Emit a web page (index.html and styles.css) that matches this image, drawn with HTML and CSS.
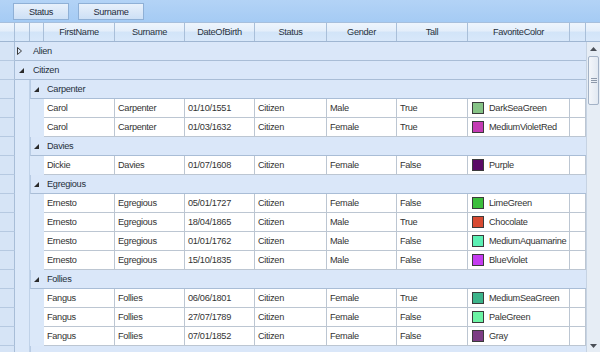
FILE: index.html
```html
<!DOCTYPE html>
<html>
<head>
<meta charset="utf-8">
<link rel="stylesheet" href="styles.css">
</head>
<body>
<div class="grid">
  <div class="grouppanel">
    <div class="gbtn w-status">Status</div>
    <div class="gbtn w-surname">Surname</div>
  </div>
  <div class="header">
    <div class="hc c-rh"></div>
    <div class="hc c-i1"></div>
    <div class="hc c-i2"></div>
    <div class="hc c-fn">FirstName</div>
    <div class="hc c-sn">Surname</div>
    <div class="hc c-db">DateOfBirth</div>
    <div class="hc c-st">Status</div>
    <div class="hc c-gd">Gender</div>
    <div class="hc c-tl">Tall</div>
    <div class="hc c-fc">FavoriteColor</div>
    <div class="hc c-ex"></div>
    <div class="hc c-sb"></div>
  </div>
  <div class="body">
    <div class="rows">
      <div class="row">
        <div class="rh"></div>
        <div class="grp l1"><span class="exp"><svg width="5" height="8" viewBox="0 0 5 8"><path d="M0.5 0.5 L4.5 4 L0.5 7.5 Z" fill="none" stroke="#3a3a3a" stroke-width="1"/></svg></span>Alien</div>
      </div>
      <div class="row">
        <div class="rh"></div>
        <div class="grp l1"><span class="exp open"><svg width="5" height="5" viewBox="0 0 5 5"><path d="M5 0 L5 5 L0 5 Z" fill="#2b2b2b"/></svg></span>Citizen</div>
      </div>

      <div class="row">
        <div class="rh"></div><div class="ind i1"></div>
        <div class="grp l2"><span class="exp open"><svg width="5" height="5" viewBox="0 0 5 5"><path d="M5 0 L5 5 L0 5 Z" fill="#2b2b2b"/></svg></span>Carpenter</div>
      </div>
      <div class="row">
        <div class="rh"></div><div class="ind i1"></div><div class="ind i2"></div>
        <div class="dc c-fn">Carol</div><div class="dc c-sn">Carpenter</div><div class="dc c-db">01/10/1551</div><div class="dc c-st">Citizen</div><div class="dc c-gd">Male</div><div class="dc c-tl">True</div>
        <div class="dc c-fc"><span class="sw" style="background:#86c386"></span>DarkSeaGreen</div><div class="dc c-ex"></div>
      </div>
      <div class="row">
        <div class="rh"></div><div class="ind i1"></div><div class="ind i2"></div>
        <div class="dc c-fn">Carol</div><div class="dc c-sn">Carpenter</div><div class="dc c-db">01/03/1632</div><div class="dc c-st">Citizen</div><div class="dc c-gd">Female</div><div class="dc c-tl">True</div>
        <div class="dc c-fc"><span class="sw" style="background:#c43cb4"></span>MediumVioletRed</div><div class="dc c-ex"></div>
      </div>

      <div class="row">
        <div class="rh"></div><div class="ind i1"></div>
        <div class="grp l2"><span class="exp open"><svg width="5" height="5" viewBox="0 0 5 5"><path d="M5 0 L5 5 L0 5 Z" fill="#2b2b2b"/></svg></span>Davies</div>
      </div>
      <div class="row">
        <div class="rh"></div><div class="ind i1"></div><div class="ind i2"></div>
        <div class="dc c-fn">Dickie</div><div class="dc c-sn">Davies</div><div class="dc c-db">01/07/1608</div><div class="dc c-st">Citizen</div><div class="dc c-gd">Female</div><div class="dc c-tl">False</div>
        <div class="dc c-fc"><span class="sw" style="background:#5a0a66"></span>Purple</div><div class="dc c-ex"></div>
      </div>

      <div class="row">
        <div class="rh"></div><div class="ind i1"></div>
        <div class="grp l2"><span class="exp open"><svg width="5" height="5" viewBox="0 0 5 5"><path d="M5 0 L5 5 L0 5 Z" fill="#2b2b2b"/></svg></span>Egregious</div>
      </div>
      <div class="row">
        <div class="rh"></div><div class="ind i1"></div><div class="ind i2"></div>
        <div class="dc c-fn">Ernesto</div><div class="dc c-sn">Egregious</div><div class="dc c-db">05/01/1727</div><div class="dc c-st">Citizen</div><div class="dc c-gd">Female</div><div class="dc c-tl">False</div>
        <div class="dc c-fc"><span class="sw" style="background:#3cbe3c"></span>LimeGreen</div><div class="dc c-ex"></div>
      </div>
      <div class="row">
        <div class="rh"></div><div class="ind i1"></div><div class="ind i2"></div>
        <div class="dc c-fn">Ernesto</div><div class="dc c-sn">Egregious</div><div class="dc c-db">18/04/1865</div><div class="dc c-st">Citizen</div><div class="dc c-gd">Male</div><div class="dc c-tl">True</div>
        <div class="dc c-fc"><span class="sw" style="background:#d84a32"></span>Chocolate</div><div class="dc c-ex"></div>
      </div>
      <div class="row">
        <div class="rh"></div><div class="ind i1"></div><div class="ind i2"></div>
        <div class="dc c-fn">Ernesto</div><div class="dc c-sn">Egregious</div><div class="dc c-db">01/01/1762</div><div class="dc c-st">Citizen</div><div class="dc c-gd">Male</div><div class="dc c-tl">False</div>
        <div class="dc c-fc"><span class="sw" style="background:#5cf0b4"></span>MediumAquamarine</div><div class="dc c-ex"></div>
      </div>
      <div class="row">
        <div class="rh"></div><div class="ind i1"></div><div class="ind i2"></div>
        <div class="dc c-fn">Ernesto</div><div class="dc c-sn">Egregious</div><div class="dc c-db">15/10/1835</div><div class="dc c-st">Citizen</div><div class="dc c-gd">Male</div><div class="dc c-tl">False</div>
        <div class="dc c-fc"><span class="sw" style="background:#c43cf0"></span>BlueViolet</div><div class="dc c-ex"></div>
      </div>

      <div class="row">
        <div class="rh"></div><div class="ind i1"></div>
        <div class="grp l2"><span class="exp open"><svg width="5" height="5" viewBox="0 0 5 5"><path d="M5 0 L5 5 L0 5 Z" fill="#2b2b2b"/></svg></span>Follies</div>
      </div>
      <div class="row">
        <div class="rh"></div><div class="ind i1"></div><div class="ind i2"></div>
        <div class="dc c-fn">Fangus</div><div class="dc c-sn">Follies</div><div class="dc c-db">06/06/1801</div><div class="dc c-st">Citizen</div><div class="dc c-gd">Female</div><div class="dc c-tl">True</div>
        <div class="dc c-fc"><span class="sw" style="background:#3cb48a"></span>MediumSeaGreen</div><div class="dc c-ex"></div>
      </div>
      <div class="row">
        <div class="rh"></div><div class="ind i1"></div><div class="ind i2"></div>
        <div class="dc c-fn">Fangus</div><div class="dc c-sn">Follies</div><div class="dc c-db">27/07/1789</div><div class="dc c-st">Citizen</div><div class="dc c-gd">Female</div><div class="dc c-tl">False</div>
        <div class="dc c-fc"><span class="sw" style="background:#6cf4a4"></span>PaleGreen</div><div class="dc c-ex"></div>
      </div>
      <div class="row">
        <div class="rh"></div><div class="ind i1"></div><div class="ind i2"></div>
        <div class="dc c-fn">Fangus</div><div class="dc c-sn">Follies</div><div class="dc c-db">07/01/1852</div><div class="dc c-st">Citizen</div><div class="dc c-gd">Female</div><div class="dc c-tl">False</div>
        <div class="dc c-fc"><span class="sw" style="background:#7c3c84"></span>Gray</div><div class="dc c-ex"></div>
      </div>
      <div class="row">
        <div class="rh"></div><div class="ind i1"></div>
        <div class="grp l2"></div>
      </div>
    </div>
    <div class="scroll">
      <div class="arrow up"><svg width="7" height="4" viewBox="0 0 7 4"><path d="M3.5 0 L7 4 L0 4 Z" fill="#4a4f57"/></svg></div>
      <div class="track">
        <div class="thumb"><span class="grip"></span><span class="grip"></span><span class="grip"></span></div>
      </div>
      <div class="arrow down"><svg width="7" height="4" viewBox="0 0 7 4"><path d="M0 0 L7 0 L3.5 4 Z" fill="#4a4f57"/></svg></div>
    </div>
  </div>
</div>
</body>
</html>
```

FILE: styles.css
```css
html, body {
  margin: 0;
  padding: 0;
}
body {
  width: 600px;
  height: 352px;
  overflow: hidden;
  font-family: "Liberation Sans", Arial, sans-serif;
  font-size: 9.2px;
  letter-spacing: -0.3px;
  color: #333333;
}
.grid {
  width: 600px;
  height: 352px;
  display: flex;
  flex-direction: column;
  background: #dce8f8;
  overflow: hidden;
}
.grouppanel {
  height: 22px;
  flex: none;
  box-sizing: border-box;
  padding: 3px 0 0 13px;
  display: flex;
  align-items: flex-start;
  gap: 9px;
  background: linear-gradient(#b3d3f6, #a5cbf4);
}
.gbtn {
  height: 17px;
  box-sizing: border-box;
  border: 1px solid #8fb0d6;
  background: linear-gradient(#e8f1fc 0%, #dbe8f8 50%, #cde0f6 100%);
  display: flex;
  align-items: center;
  justify-content: center;
  color: #1e2a3a;
}
.w-status { width: 56px; }
.w-surname { width: 66px; }

.header {
  height: 20px;
  flex: none;
  display: flex;
  box-sizing: border-box;
  border-top: 1px solid #a7bfdc;
  border-bottom: 1px solid #9fb6d2;
  background: linear-gradient(#eef5fd 0%, #e4eefa 45%, #d2e4f8 50%, #d8e8fa 100%);
}
.hc {
  box-sizing: border-box;
  border-right: 1px solid #a9bfd9;
  display: flex;
  align-items: center;
  justify-content: center;
  color: #27313d;
}
.c-rh { width: 15px; }
.c-i1 { width: 15px; }
.c-i2 { width: 14px; }
.c-fn { width: 71px; }
.c-sn { width: 70px; }
.c-db { width: 70px; }
.c-st { width: 72px; }
.c-gd { width: 70px; }
.c-tl { width: 71px; }
.c-fc { width: 102px; }
.c-ex { width: 16px; }
.c-sb { width: 14px; border-right: none; }

.body {
  flex: 1;
  min-height: 0;
  display: flex;
}
.rows {
  width: 586px;
  display: flex;
  flex-direction: column;
  overflow: hidden;
}
.row {
  height: 19px;
  flex: none;
  display: flex;
}
.rh {
  width: 15px;
  flex: none;
  box-sizing: border-box;
  border-right: 1px solid #a8bdd7;
  border-bottom: 1px solid #b6c9e1;
  background: #d6e4f6;
}
.ind {
  flex: none;
  box-sizing: border-box;
  background: #dbe8f9;
}
.ind.i1 { width: 15px; border-right: 1px solid #c0d2e8; }
.ind.i2 { width: 14px; }
.grp {
  flex: 1;
  display: flex;
  align-items: center;
  box-sizing: border-box;
  border-bottom: 1px solid #a9bdd6;
  background: #dae7f9;
  color: #26303c;
}
.grp.l2 {
  border-left: 1px solid #b9cce4;
}
.exp {
  width: 18px;
  flex: none;
  display: flex;
  align-items: center;
  padding-left: 2px;
  box-sizing: border-box;
}
.exp.open { padding-left: 4px; }
.grp.l2 .exp { width: 16px; padding-left: 3px; }
.exp svg { display: block; }

.dc {
  flex: none;
  box-sizing: border-box;
  background: #ffffff;
  border-right: 1px solid #bcc6d2;
  border-bottom: 1px solid #bcc6d2;
  display: flex;
  align-items: center;
  padding-left: 3px;
  white-space: nowrap;
  overflow: hidden;
}
.dc.c-fc { padding-left: 4px; }
.sw {
  width: 12px;
  height: 12px;
  box-sizing: border-box;
  border: 1px solid #3b3b3b;
  margin-right: 5px;
  flex: none;
}

.scroll {
  width: 14px;
  flex: none;
  display: flex;
  flex-direction: column;
  box-sizing: border-box;
  border-left: 1px solid #c6d3e3;
  background: #e6edf5;
}
.arrow {
  height: 13px;
  flex: none;
  display: flex;
  align-items: center;
  justify-content: center;
}
.track {
  flex: 1;
  padding-top: 1px;
}
.thumb {
  margin: 0 1px;
  height: 49px;
  box-sizing: border-box;
  border: 1px solid #a3b2c6;
  border-radius: 2px;
  background: linear-gradient(90deg, #f3f6fa, #e2e9f2);
  display: flex;
  flex-direction: column;
  align-items: center;
  justify-content: center;
  gap: 1px;
}
.grip {
  width: 6px;
  height: 1px;
  background: #8d99aa;
}
```
